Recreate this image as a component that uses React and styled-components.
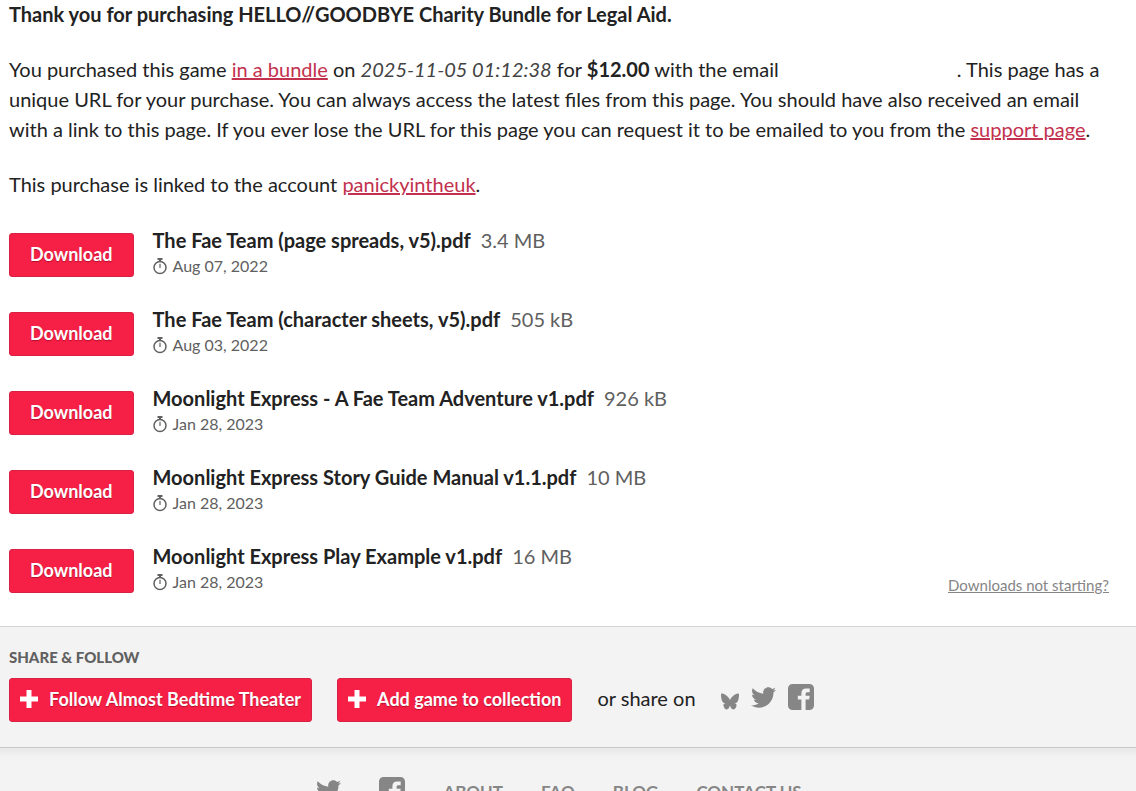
import React from "react";
import styled, { createGlobalStyle } from "styled-components";
import { FaTwitter } from "react-icons/fa";

const GlobalStyle = createGlobalStyle`
  * { box-sizing: border-box; }
  body {
    margin: 0;
    background: #f3f3f3;
    color: #222;
    font-family: Lato, "Liberation Sans", sans-serif;
    font-size: 20px;
    line-height: 30px;
  }
`;

const Purchase = styled.main`
  background: #fff;
  border-bottom: 1px solid #d6d6d6;
  padding: 0 27px 33px 9px;
`;

const Title = styled.h1`
  margin: 0 0 26px;
  font-size: 20px;
  line-height: 28px;
  font-weight: 700;
`;

const Paragraph = styled.p`
  margin: 0 0 25px;
`;

const TextLink = styled.a`
  color: #c2314d;
  text-decoration: underline;
`;

const PurchaseDate = styled.em`
  color: #434343;
`;

const HiddenEmail = styled.span`
  display: inline-block;
  width: 173px;
`;

const Downloads = styled.div`
  display: flex;
  align-items: flex-end;
  justify-content: space-between;
`;

const FileList = styled.ul`
  display: flex;
  flex-direction: column;
  gap: 27px;
  margin: 0;
  padding: 1px 0 0;
  list-style: none;
`;

const FileRow = styled.li`
  display: flex;
  align-items: flex-end;
  gap: 19px;
`;

const Button = styled.button`
  display: inline-flex;
  align-items: center;
  gap: 11px;
  height: 44px;
  padding: 0 ${(p) => (p.$icon ? "10px" : "20px")} 2px;
  border: 1px solid #d92243;
  border-radius: 3px;
  background: #f61f45;
  color: #fff;
  font-family: inherit;
  font-size: 18px;
  font-weight: 700;
  text-shadow: 0 1px 1px rgba(120, 0, 25, 0.5);
  cursor: pointer;
`;

const FileInfo = styled.div`
  height: 52px;
`;

const FileName = styled.div`
  display: flex;
  gap: 10px;
  line-height: 30px;
`;

const FileSize = styled.span`
  color: #606060;
`;

const FileDate = styled.div`
  display: flex;
  align-items: center;
  gap: 5px;
  color: #606060;
  font-size: 16px;
  line-height: 22px;
`;

const HelpLink = styled.a`
  color: #858585;
  font-size: 15px;
  line-height: 16px;
`;

const Share = styled.section`
  padding: 20px 9px 25px;
  border-bottom: 1px solid #c8c8c8;
`;

const ShareTitle = styled.h2`
  margin: 0 0 11px;
  color: #606060;
  font-size: 15px;
  line-height: 20px;
  font-weight: 900;
`;

const ShareRow = styled.div`
  display: flex;
  align-items: center;
  gap: 25px;
`;

const ShareText = styled.span`
  line-height: 30px;
  padding-bottom: 4px;
`;

const IconLinks = styled.div`
  display: flex;
  align-items: flex-end;
  gap: 12px;
  padding-bottom: 6px;
`;

const IconLink = styled.a`
  display: flex;
  color: #868686;
`;

const Footer = styled.footer`
  display: flex;
  align-items: center;
  justify-content: center;
  gap: 38px;
  padding: 25px 27px 20px 9px;
  background: linear-gradient(#e8e8e8, #f3f3f3 10px);
`;

const FooterLink = styled.a`
  padding-top: 4px;
  color: #868686;
  font-size: 17px;
  line-height: 30px;
  font-weight: 700;
  text-decoration: none;
`;

const TimerIcon = () => (
  <svg width="15" height="17" viewBox="0 0 15 17" fill="none" stroke="currentColor" aria-hidden="true">
    <circle cx="7" cy="9.500" r="6" strokeWidth="1.5" />
    <path d="M4.500 1h5M7 1v2.500" strokeWidth="2" />
    <path d="M7 5.800v4.200" strokeWidth="1.2" />
  </svg>
);

const PlusIcon = () => (
  <svg width="18" height="18" viewBox="0 0 18 18" fill="currentColor" aria-hidden="true">
    <path d="M6.5 0h5v6.5H18v5h-6.5V18h-5v-6.5H0v-5h6.5z" />
  </svg>
);

const ButterflyIcon = () => (
  <svg width="18" height="17" viewBox="0 0 18 17" fill="currentColor" aria-hidden="true">
    <path d="M9 7.200C8 4.600 4.800 1.400 1.600.6.500.4 0 .8 0 1.900c0 1.800.6 5.500 1.500 6.900.7 1.100 1.800 1.400 3.100 1.300-1.800.5-2.500 1.600-2 3.100.5 1.700 1.700 3.200 3.100 3.200 1.800 0 2.700-2.300 3.300-4 .6 1.700 1.500 4 3.300 4 1.400 0 2.600-1.500 3.100-3.200.5-1.500-.2-2.600-2-3.100 1.300.1 2.400-.2 3.100-1.300.9-1.400 1.500-5.100 1.500-6.900 0-1.100-.5-1.500-1.600-1.300C13.200 1.400 10 4.600 9 7.200z" />
  </svg>
);

const FacebookIcon = () => (
  <svg width="26" height="26" viewBox="0 0 26 26" fill="currentColor" aria-hidden="true">
    <path d="M4.5 0h17A4.5 4.5 0 0 1 26 4.5v17a4.5 4.5 0 0 1-4.500 4.500H17.600v-10.400h3.500l.6-3.900h-4.100V9.900c0-1.200.6-1.700 1.800-1.700h2.300V4.500h-3.400c-3.400 0-4.900 1.900-4.900 4.900v2.300H9.800v3.900h3.600V26H4.500A4.500 4.500 0 0 1 0 21.500v-17A4.500 4.500 0 0 1 4.500 0z" />
  </svg>
);

const files = [
  ["The Fae Team (page spreads, v5).pdf", "3.4 MB", "Aug 07, 2022"],
  ["The Fae Team (character sheets, v5).pdf", "505 kB", "Aug 03, 2022"],
  ["Moonlight Express - A Fae Team Adventure v1.pdf", "926 kB", "Jan 28, 2023"],
  ["Moonlight Express Story Guide Manual v1.1.pdf", "10 MB", "Jan 28, 2023"],
  ["Moonlight Express Play Example v1.pdf", "16 MB", "Jan 28, 2023"],
];

export default function App() {
  return (
    <>
      <GlobalStyle />
      <Purchase>
        <Title>Thank you for purchasing HELLO//GOODBYE Charity Bundle for Legal Aid.</Title>
        <Paragraph>
          You purchased this game <TextLink href="#bundle">in a bundle</TextLink> on{" "}
          <PurchaseDate>2025-11-05 01:12:38</PurchaseDate> for <strong>$12.00</strong> with the email{" "}
          <HiddenEmail />. This page has a unique URL for your purchase. You can always access the
          latest files from this page. You should have also received an email with a link to this
          page. If you ever lose the URL for this page you can request it to be emailed to you from
          the <TextLink href="#support">support page</TextLink>.
        </Paragraph>
        <Paragraph>
          This purchase is linked to the account <TextLink href="#account">panickyintheuk</TextLink>.
        </Paragraph>
        <Downloads>
          <FileList>
            {files.map(([name, size, date]) => (
              <FileRow key={name}>
                <Button type="button">Download</Button>
                <FileInfo>
                  <FileName>
                    <strong>{name}</strong>
                    <FileSize>{size}</FileSize>
                  </FileName>
                  <FileDate>
                    <TimerIcon />
                    {date}
                  </FileDate>
                </FileInfo>
              </FileRow>
            ))}
          </FileList>
          <HelpLink href="#help">Downloads not starting?</HelpLink>
        </Downloads>
      </Purchase>
      <Share>
        <ShareTitle>SHARE &amp; FOLLOW</ShareTitle>
        <ShareRow>
          <Button type="button" $icon>
            <PlusIcon />
            Follow Almost Bedtime Theater
          </Button>
          <Button type="button" $icon>
            <PlusIcon />
            Add game to collection
          </Button>
          <ShareText>or share on</ShareText>
          <IconLinks>
            <IconLink href="#bluesky" aria-label="Bluesky"><ButterflyIcon /></IconLink>
            <IconLink href="#twitter" aria-label="Twitter"><FaTwitter size={25} /></IconLink>
            <IconLink href="#facebook" aria-label="Facebook"><FacebookIcon /></IconLink>
          </IconLinks>
        </ShareRow>
      </Share>
      <Footer>
        <IconLink href="#twitter" aria-label="Twitter"><FaTwitter size={25} /></IconLink>
        <IconLink href="#facebook" aria-label="Facebook"><FacebookIcon /></IconLink>
        <FooterLink href="#about">ABOUT</FooterLink>
        <FooterLink href="#faq">FAQ</FooterLink>
        <FooterLink href="#blog">BLOG</FooterLink>
        <FooterLink href="#contact">CONTACT US</FooterLink>
      </Footer>
    </>
  );
}
